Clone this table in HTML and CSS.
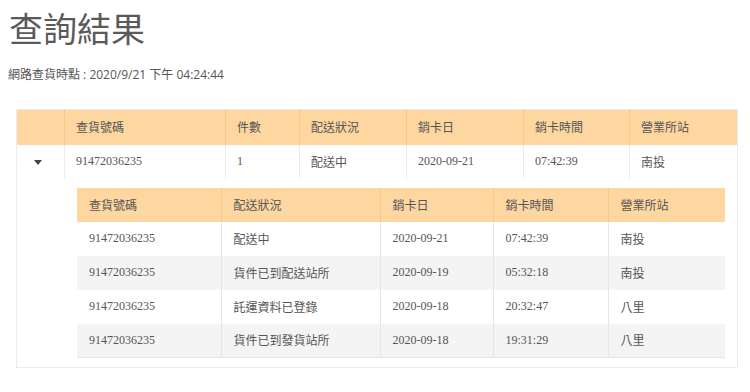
FILE: index.html
```html
<!DOCTYPE html>
<html lang="zh-Hant">
<head>
<meta charset="utf-8">
<title>查詢結果</title>
<link rel="stylesheet" href="styles.css">
</head>
<body>
<h1 class="title">查詢結果</h1>
<p class="stamp">網路查貨時點 : 2020/9/21 下午 04:24:44</p>
<table class="outer">
  <thead>
    <tr>
      <th class="o1"></th>
      <th class="o2">查貨號碼</th>
      <th class="o3">件數</th>
      <th class="o4">配送狀況</th>
      <th class="o5">銷卡日</th>
      <th class="o6">銷卡時間</th>
      <th class="o7">營業所站</th>
    </tr>
  </thead>
  <tbody>
    <tr class="main-row">
      <td class="toggle"><span class="caret"></span></td>
      <td>91472036235</td>
      <td>1</td>
      <td>配送中</td>
      <td>2020-09-21</td>
      <td>07:42:39</td>
      <td>南投</td>
    </tr>
    <tr class="detail-row">
      <td colspan="7" class="detail">
        <table class="inner">
          <thead>
            <tr>
              <th class="i1">查貨號碼</th>
              <th class="i2">配送狀況</th>
              <th class="i3">銷卡日</th>
              <th class="i4">銷卡時間</th>
              <th class="i5">營業所站</th>
            </tr>
          </thead>
          <tbody>
            <tr><td>91472036235</td><td>配送中</td><td>2020-09-21</td><td>07:42:39</td><td>南投</td></tr>
            <tr><td>91472036235</td><td>貨件已到配送站所</td><td>2020-09-19</td><td>05:32:18</td><td>南投</td></tr>
            <tr><td>91472036235</td><td>託運資料已登錄</td><td>2020-09-18</td><td>20:32:47</td><td>八里</td></tr>
            <tr><td>91472036235</td><td>貨件已到發貨站所</td><td>2020-09-18</td><td>19:31:29</td><td>八里</td></tr>
          </tbody>
        </table>
      </td>
    </tr>
  </tbody>
</table>
</body>
</html>
```
FILE: styles.css
```css
html, body {
  margin: 0;
  padding: 0;
  background: #fff;
}
body {
  padding: 11px 8px 0 8px;
  font-family: "Noto Sans CJK TC", sans-serif;
  color: #555;
}
.title {
  margin: 0 0 0 1px;
  font-size: 34px;
  line-height: 34px;
  font-weight: normal;
  color: #5a5a5a;
}
.stamp {
  margin: 23px 0 0 0;
  font-family: "Open Sans", "Noto Sans CJK TC", sans-serif;
  font-size: 12px;
  line-height: 14px;
  color: #555;
}
.outer, .inner {
  border-collapse: collapse;
  table-layout: fixed;
  font-family: "Liberation Serif", "Noto Sans CJK TC", serif;
  font-size: 12px;
  color: #555;
}
.outer {
  margin: 27px 0 0 8px;
  width: 721px;
  border: 1px solid #ececec;
}
th, td {
  box-sizing: border-box;
  text-align: left;
  font-weight: normal;
  padding: 0 0 0 11px;
  vertical-align: middle;
}
.outer thead th {
  background: #fdd6a0;
  height: 35px;
  border-left: 1px solid #f3c98f;
}
.outer thead th:first-child { border-left: none; }
.o1 { width: 48px; }
.o2 { width: 161px; }
.o3 { width: 74px; }
.o4 { width: 107px; }
.o5 { width: 117px; }
.o6 { width: 106px; }
.o7 { width: 108px; }
.main-row td {
  height: 34px;
  border-left: 1px solid #ececec;
}
.main-row td:first-child { border-left: none; }
.toggle {
  padding: 0;
  text-align: center;
}
.caret {
  display: inline-block;
  width: 0;
  height: 0;
  border-left: 4px solid transparent;
  border-right: 4px solid transparent;
  border-top: 5px solid #444;
  vertical-align: middle;
  margin-left: -6px;
}
.detail {
  padding: 9px 13px 9px 60px;
}
.inner {
  width: 648px;
}
.inner thead th {
  background: #fdd6a0;
  height: 34px;
  padding-left: 12px;
  border-left: 1px solid #f3c98f;
}
.inner thead th:first-child { border-left: none; }
.i1 { width: 144px; }
.i2 { width: 159px; }
.i3 { width: 113px; }
.i4 { width: 115px; }
.i5 { width: 117px; }
.inner tbody td {
  height: 34px;
  padding-left: 12px;
  border-left: 1px solid #e6e6e6;
}
.inner tbody td:first-child { border-left: none; }
.inner tbody tr:nth-child(even) td {
  background: #f4f4f4;
}
.inner tbody tr:last-child td {
  border-bottom: 1px solid #e6e6e6;
}
```
